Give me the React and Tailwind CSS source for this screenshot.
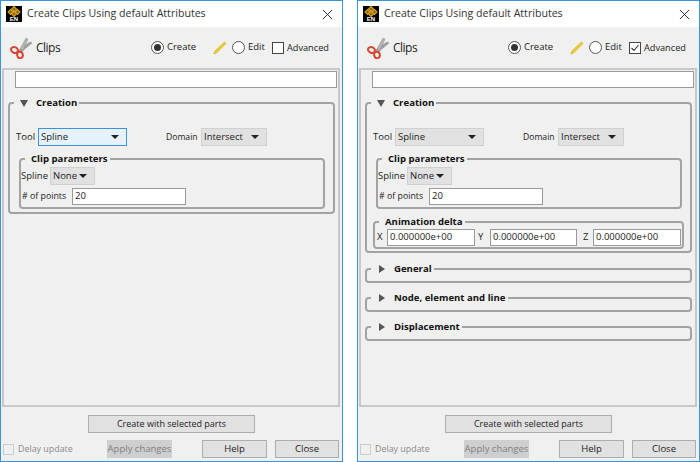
import React from "react";

function Logo() {
  return (
    <div className="w-4 h-[16px] bg-black flex flex-col items-center shrink-0">
      <svg viewBox="0 0 16 11" className="w-4 h-[11px]">
        <g fill="#8a6410" stroke="#d39f22" strokeWidth="1.1">
          <path d="M8 0.5 L10.5 3 L8 5.5 L5.5 3 Z" />
          <path d="M4.5 3.5 L7 6 L4.5 8.5 L2 6 Z" />
          <path d="M11.5 3.5 L14 6 L11.5 8.5 L9 6 Z" />
          <path d="M8 5.5 L10.5 8 L8 10.5 L5.5 8 Z" />
        </g>
      </svg>
      <span className="text-[6px] leading-[5px] font-bold text-white font-['Liberation_Sans',sans-serif]">EN</span>
    </div>
  );
}

function Scissors() {
  return (
    <svg viewBox="0 0 24 22" className="w-[24px] h-[22px] shrink-0">
      <path d="M10 13 L21 5 L23 6 L12 15 Z" fill="#a0a0a0" stroke="#858585" strokeWidth="0.5" />
      <path d="M11 12 L17 1 L19 2 L14 14 Z" fill="#b5b5b5" stroke="#8a8a8a" strokeWidth="0.5" />
      <ellipse cx="5.5" cy="13" rx="3.6" ry="2.8" fill="none" stroke="#d8442f" strokeWidth="2" transform="rotate(25 5.5 13)" />
      <ellipse cx="11" cy="18" rx="2.8" ry="3.2" fill="none" stroke="#d8442f" strokeWidth="2" transform="rotate(-15 11 18)" />
    </svg>
  );
}

function Pencil() {
  return (
    <svg viewBox="0 0 14 14" className="w-[14px] h-[14px] shrink-0">
      <path d="M1 13 L2 10 L11.5 1 L13 2.5 L3.5 12 Z" fill="#f2cd2e" stroke="#c9a21a" strokeWidth="0.6" />
    </svg>
  );
}

function Radio({ on }) {
  return (
    <span className="w-[13px] h-[13px] rounded-full border border-[#555] bg-white flex items-center justify-center shrink-0">
      {on && <span className="w-[7px] h-[7px] rounded-full bg-[#333]" />}
    </span>
  );
}

function Check({ on }) {
  return (
    <span className="w-[12px] h-[12px] border border-[#444] bg-white flex items-center justify-center shrink-0">
      {on && (
        <svg viewBox="0 0 10 10" className="w-[10px] h-[10px]">
          <path d="M1.5 5 L4 7.5 L8.5 2" fill="none" stroke="#333" strokeWidth="1.1" />
        </svg>
      )}
    </span>
  );
}

function Combo({ w, label, focus }) {
  return (
    <div
      className={
        "h-[18px] flex items-center justify-between pl-[2px] pr-[7px] shrink-0 border " +
        (focus ? "bg-[#e5f1fb] border-[#3b93dc]" : "bg-[#e1e1e1] border-[#d0d0d0]")
      }
      style={{ width: w }}
    >
      <span>{label}</span>
      <span className="w-0 h-0 border-x-[4px] border-x-transparent border-t-[4px] border-t-[#222]" />
    </div>
  );
}

function Field({ value, className }) {
  return (
    <div className={"h-[17px] bg-white border border-[#999] flex items-center pl-[2px] " + className}>{value}</div>
  );
}

function Group({ title, arrow, className, children }) {
  return (
    <div className={"relative border-2 border-[#a3a3a3] rounded-[4px] " + className}>
      <div className="absolute -top-[8px] left-[4px] flex items-center bg-[#f0f0f0] h-[14px] px-[2px] font-bold text-[9.6px] text-[#111]">
        {arrow === "down" && <span className="ml-[4px] mr-[8px] w-0 h-0 border-x-[4px] border-x-transparent border-t-[7px] border-t-[#555]" />}
        {arrow === "right" && <span className="ml-[6px] mr-[9px] w-0 h-0 border-y-[4px] border-y-transparent border-l-[6px] border-l-[#555]" />}
        {!arrow && <span className="w-[4px]" />}
        {title}
      </div>
      {children}
    </div>
  );
}

function Btn({ label, className }) {
  return (
    <div className={"h-[18px] bg-[#e1e1e1] border border-[#adadad] flex items-center justify-center " + className}>{label}</div>
  );
}

function Window({ advanced }) {
  return (
    <div className="w-[343px] h-[462px] border-[1.5px] border-[#3b93dc] bg-[#f0f0f0] flex flex-col text-[9.5px] whitespace-nowrap text-[#222] font-['Open_Sans',sans-serif] overflow-hidden">
      <div className="h-[26px] bg-white flex items-center pl-[5px] pr-[9px] shrink-0">
        <Logo />
        <span className="ml-[5px] text-[10.6px] text-[#333]">Create Clips Using default Attributes</span>
        <svg viewBox="0 0 12 12" className="ml-auto w-[11px] h-[11px]">
          <path d="M1 1 L11 11 M11 1 L1 11" stroke="#222" strokeWidth="1" />
        </svg>
      </div>
      <div className="h-[41px] flex items-center pl-[8px] shrink-0">
        <Scissors />
        <span className="ml-[3px] text-[12px] tracking-[-0.5px] w-[25px]">Clips</span>
        <div className="ml-[90px]"><Radio on /></div>
        <span className="ml-[3px] w-[28px]">Create</span>
        <div className="ml-[18px]"><Pencil /></div>
        <div className="ml-[5px]"><Radio /></div>
        <span className="ml-[3px] w-[16px]">Edit</span>
        <div className="ml-[8px]"><Check on={advanced} /></div>
        <span className="ml-[3px] text-[9.2px]">Advanced</span>
      </div>
      <div className="h-[339px] ml-[1px] mr-[2px] border-2 border-[#c8c8c8] shrink-0 flex flex-col">
        <div className="h-[17px] mt-[1px] ml-[11px] mr-[1px] bg-white border border-[#999] shrink-0" />
        <Group title="Creation" arrow="down" className={"mt-[14px] ml-[4px] mr-[3px] shrink-0 " + (advanced ? "h-[151px]" : "h-[112px]")}>
          <div className="flex items-center mt-[24px] pl-[6px]">
            <span className="w-[22px]">Tool</span>
            <Combo w={89} label="Spline" focus={!advanced} />
            <span className="ml-[39px] mr-[2px] w-[33px] text-[8.6px]">Domain</span>
            <Combo w={66} label="Intersect" />
          </div>
          <Group title="Clip parameters" className="mt-[12px] ml-[9px] mr-[8px] h-[51px]">
            <div className="flex items-center mt-[7px]">
              <span className="w-[29px]">Spline</span>
              <Combo w={45} label="None" />
            </div>
            <div className="flex items-center mt-[3px] pl-[1px]">
              <span className="w-[50px] text-[8.8px]"># of points</span>
              <Field value="20" className="w-[114px]" />
            </div>
          </Group>
          {advanced && (
            <Group title="Animation delta" className="mt-[12px] ml-[6px] mr-[6px] h-[28px]">
              <div className="flex items-center mt-[6px] pl-[2px]">
                <span className="w-[10px]">X</span>
                <Field value="0.000000e+00" className="w-[88px]" />
                <span className="ml-[3px] w-[12px]">Y</span>
                <Field value="0.000000e+00" className="w-[87px]" />
                <span className="ml-[6px] w-[10px]">Z</span>
                <Field value="0.000000e+00" className="w-[88px]" />
              </div>
            </Group>
          )}
        </Group>
        {advanced && (
          <>
            <Group title="General" arrow="right" className="mt-[15px] ml-[4px] mr-[3px] h-[15px] shrink-0" />
            <Group title="Node, element and line" arrow="right" className="mt-[14px] ml-[4px] mr-[3px] h-[15px] shrink-0" />
            <Group title="Displacement" arrow="right" className="mt-[14px] ml-[4px] mr-[3px] h-[15px] shrink-0" />
          </>
        )}
      </div>
      <div className="flex justify-center mt-[8px] shrink-0 text-[9px]">
        <Btn label="Create with selected parts" className="w-[167px]" />
      </div>
      <div className="flex items-center mt-[7px] pl-[2px] shrink-0">
        <span className="w-[11px] h-[11px] border border-[#ccc] bg-[#f0f0f0]" />
        <span className="ml-[4px] w-[55px] text-[8.9px] text-[#8a8a8a]">Delay update</span>
        <div className="ml-[34px] w-[65px] h-[18px] bg-[#cfcfcf] flex items-center justify-center text-[#808080]">Apply changes</div>
        <Btn label="Help" className="ml-[30px] w-[65px]" />
        <Btn label="Close" className="ml-[8px] w-[64px]" />
      </div>
    </div>
  );
}

export default function App() {
  return (
    <div className="w-[700px] h-[462px] bg-white flex justify-between">
      <Window />
      <Window advanced />
    </div>
  );
}
